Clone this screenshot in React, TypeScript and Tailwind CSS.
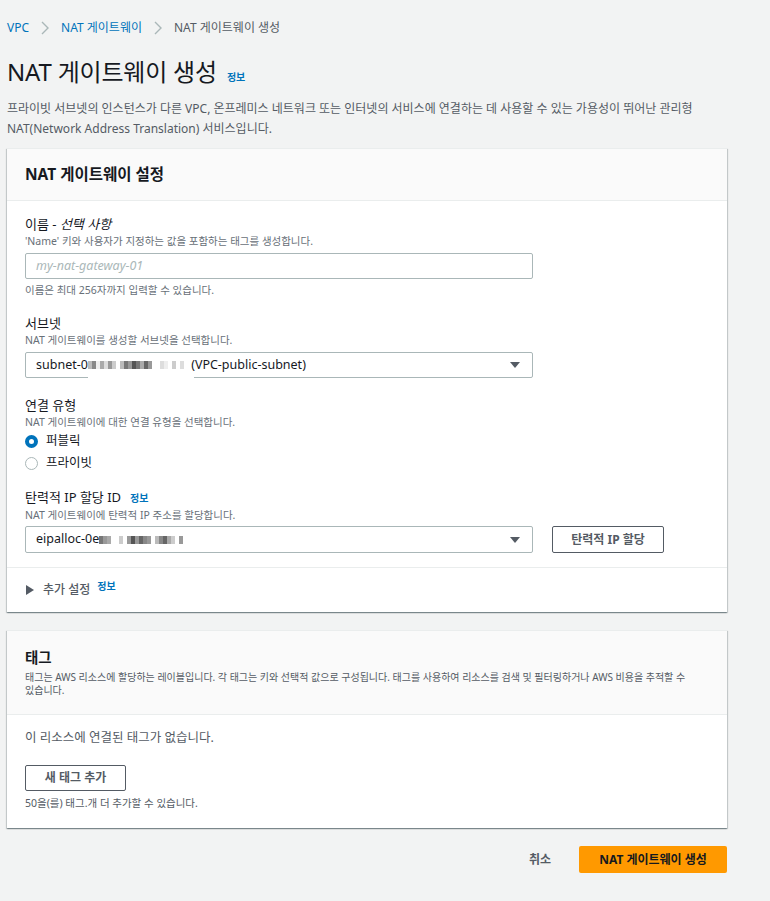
import React from "react";

const font = { fontFamily: '"Noto Sans", "Noto Sans CJK KR", sans-serif' };

function Mosaic({ cells }: { cells: string[] }) {
  return (
    <span className="inline-flex items-center h-[10px] align-middle">
      {cells.map((c, i) => (
        <span key={i} className={`inline-block w-[4px] h-[8px] ${c}`} />
      ))}
    </span>
  );
}

function Caret() {
  return (
    <svg width="12" height="8" viewBox="0 0 12 8" className="text-[#545b64]">
      <path d="M1 1h10L6 7z" fill="currentColor" />
    </svg>
  );
}

function Chevron() {
  return (
    <svg width="10" height="14" viewBox="0 0 10 14" className="mx-[11px]">
      <path d="M2 1l6 6-6 6" stroke="#aab7b8" strokeWidth="1.4" fill="none" />
    </svg>
  );
}

export default function App() {
  const subnetCells = [
    "bg-[#bbb]", "bg-[#888]", "bg-[#eee]", "bg-[#aaa]", "bg-[#ddd]", "bg-[#999]", "bg-[#ccc]", "bg-[#fff]",
    "bg-[#bbb]", "bg-[#777]", "bg-[#999]", "bg-[#555]", "bg-[#777]", "bg-[#aaa]", "bg-[#666]", "bg-[#999]",
    "bg-[#fff]", "bg-[#fff]", "bg-[#ddd]", "bg-[#eee]", "bg-[#fff]", "bg-[#ccc]", "bg-[#fff]", "bg-[#ddd]", "bg-[#fff]",
  ];
  const eipCells = [
    "bg-[#777]", "bg-[#999]", "bg-[#aaa]", "bg-[#fff]", "bg-[#fff]", "bg-[#ccc]", "bg-[#fff]", "bg-[#999]",
    "bg-[#555]", "bg-[#999]", "bg-[#666]", "bg-[#888]", "bg-[#999]", "bg-[#fff]", "bg-[#bbb]", "bg-[#888]",
    "bg-[#666]", "bg-[#aaa]", "bg-[#ccc]", "bg-[#fff]", "bg-[#999]", "bg-[#fff]",
  ];
  return (
    <div style={font} className="min-h-[901px] bg-[#f2f3f3] text-[#16191f] pl-[7px] pr-[43px] pt-[19px]">
      {/* breadcrumb */}
      <div className="flex items-center text-[12px] h-[18px]">
        <span className="text-[#0073bb]">VPC</span>
        <Chevron />
        <span className="text-[#0073bb]">NAT 게이트웨이</span>
        <Chevron />
        <span className="text-[#545b64]">NAT 게이트웨이 생성</span>
      </div>

      {/* title */}
      <div className="flex items-baseline mt-[20px]">
        <h1 className="text-[24px] leading-[30px] font-normal tracking-[-0.2px]">NAT 게이트웨이 생성</h1>
        <span className="ml-[10px] text-[10px] font-bold text-[#0073bb]">정보</span>
      </div>
      <p className="mt-[12px] text-[12px] leading-[20px] text-[#545b64] pr-[30px]">
        프라이빗 서브넷의 인스턴스가 다른 VPC, 온프레미스 네트워크 또는 인터넷의 서비스에 연결하는 데 사용할 수 있는 가용성이 뛰어난 관리형
        NAT(Network Address Translation) 서비스입니다.
      </p>

      {/* card 1 */}
      <div className="mt-[9px] bg-white border-t border-[#eaeded] shadow-[0_1px_1px_0_rgba(0,28,36,0.3),1px_1px_1px_0_rgba(0,28,36,0.15),-1px_1px_1px_0_rgba(0,28,36,0.15)]">
        <div className="h-[52px] bg-[#fafafa] border-b border-[#eaeded] flex items-center px-[18px]">
          <h2 className="text-[15.5px] font-bold">NAT 게이트웨이 설정</h2>
        </div>
        <div className="px-[18px] pt-[14px]">
          {/* name */}
          <div className="text-[13px] leading-[18px]">
            이름 - <i>선택 사항</i>
          </div>
          <div className="text-[10.5px] leading-[16px] text-[#687078]">'Name' 키와 사용자가 지정하는 값을 포함하는 태그를 생성합니다.</div>
          <div className="mt-[4px] w-[508px] h-[26px] border border-[#aab7b8] rounded-[2px] flex items-center px-[10px]">
            <span className="text-[12.5px] italic text-[#aab7b8]">my-nat-gateway-01</span>
          </div>
          <div className="mt-[3px] text-[10.5px] leading-[16px] text-[#687078]">이름은 최대 256자까지 입력할 수 있습니다.</div>

          {/* subnet */}
          <div className="mt-[16px] text-[13px] leading-[18px]">서브넷</div>
          <div className="text-[10.5px] leading-[16px] text-[#687078]">NAT 게이트웨이를 생성할 서브넷을 선택합니다.</div>
          <div className="relative mt-[4px] w-[508px] h-[26px] border border-[#aab7b8] rounded-[2px] flex items-center pl-[10px] pr-[11px]">
            <div className="absolute left-[62px] top-[14px] w-[106px] h-[18px] bg-white" />
            <span className="relative flex items-center text-[12.5px] whitespace-nowrap">
              subnet-0
              <Mosaic cells={subnetCells} />
              &nbsp;(VPC-public-subnet)
            </span>
            <span className="ml-auto"><Caret /></span>
          </div>

          {/* connectivity */}
          <div className="mt-[18px] text-[13px] leading-[18px]">연결 유형</div>
          <div className="text-[10.5px] leading-[16px] text-[#687078]">NAT 게이트웨이에 대한 연결 유형을 선택합니다.</div>
          <div className="flex items-center h-[22px]">
            <span className="w-[13px] h-[13px] rounded-full border-[4px] border-[#0073bb] bg-white" />
            <span className="ml-[8px] text-[12.5px]">퍼블릭</span>
          </div>
          <div className="flex items-center h-[22px]">
            <span className="w-[13px] h-[13px] rounded-full border border-[#aab7b8] bg-white" />
            <span className="ml-[8px] text-[12.5px]">프라이빗</span>
          </div>

          {/* eip */}
          <div className="mt-[14px] flex items-baseline text-[13px] leading-[18px]">
            탄력적 IP 할당 ID
            <span className="ml-[9px] text-[10px] font-bold text-[#0073bb]">정보</span>
          </div>
          <div className="text-[10.5px] leading-[16px] text-[#687078]">NAT 게이트웨이에 탄력적 IP 주소를 할당합니다.</div>
          <div className="mt-[3px] flex items-center">
            <div className="w-[508px] h-[27px] border border-[#aab7b8] rounded-[2px] flex items-center pl-[10px] pr-[11px]">
              <span className="flex items-center text-[12.5px] whitespace-nowrap">
                eipalloc-0e
                <Mosaic cells={eipCells} />
              </span>
              <span className="ml-auto"><Caret /></span>
            </div>
            <button className="ml-[19px] w-[112px] h-[27px] border border-[#545b64] rounded-[2px] text-[12px] font-bold text-[#545b64]">
              탄력적 IP 할당
            </button>
          </div>
        </div>
        <div className="mt-[14px] border-t border-[#eaeded] h-[45px] px-[18px] flex items-center">
          <svg width="8" height="10" viewBox="0 0 8 10" className="ml-[1px]">
            <path d="M0 0l8 5-8 5z" fill="#545b64" />
          </svg>
          <span className="ml-[9px] text-[12px] font-medium text-[#545b64]">추가 설정</span>
          <span className="ml-[7px] -mt-[8px] text-[10px] font-bold text-[#0073bb]">정보</span>
        </div>
      </div>

      {/* card 2 */}
      <div className="mt-[18px] bg-white border-t border-[#eaeded] shadow-[0_1px_1px_0_rgba(0,28,36,0.3),1px_1px_1px_0_rgba(0,28,36,0.15),-1px_1px_1px_0_rgba(0,28,36,0.15)]">
        <div className="bg-[#fafafa] border-b border-[#eaeded] px-[18px] pt-[17px] pb-[17px]">
          <h2 className="text-[14.5px] leading-[18px] font-bold">태그</h2>
          <p className="mt-[5px] text-[10px] leading-[13px] text-[#545b64] break-keep">
            태그는 AWS 리소스에 할당하는 레이블입니다. 각 태그는 키와 선택적 값으로 구성됩니다. 태그를 사용하여 리소스를 검색 및 필터링하거나 AWS 비용을 추적할 수
            있습니다.
          </p>
        </div>
        <div className="px-[18px] pt-[14px] pb-[17px]">
          <div className="text-[12.5px] leading-[18px] text-[#545b64]">이 리소스에 연결된 태그가 없습니다.</div>
          <button className="mt-[18px] w-[101px] h-[26px] border border-[#545b64] rounded-[2px] text-[12px] font-bold text-[#545b64]">
            새 태그 추가
          </button>
          <div className="mt-[4px] text-[10.5px] leading-[16px] text-[#545b64]">50을(를) 태그.개 더 추가할 수 있습니다.</div>
        </div>
      </div>

      {/* footer */}
      <div className="mt-[18px] flex items-center justify-end">
        <span className="text-[12px] font-bold text-[#545b64]">취소</span>
        <button className="ml-[28px] w-[148px] h-[27px] bg-[#ff9900] rounded-[2px] text-[12px] font-bold text-[#16191f]">
          NAT 게이트웨이 생성
        </button>
      </div>
    </div>
  );
}
